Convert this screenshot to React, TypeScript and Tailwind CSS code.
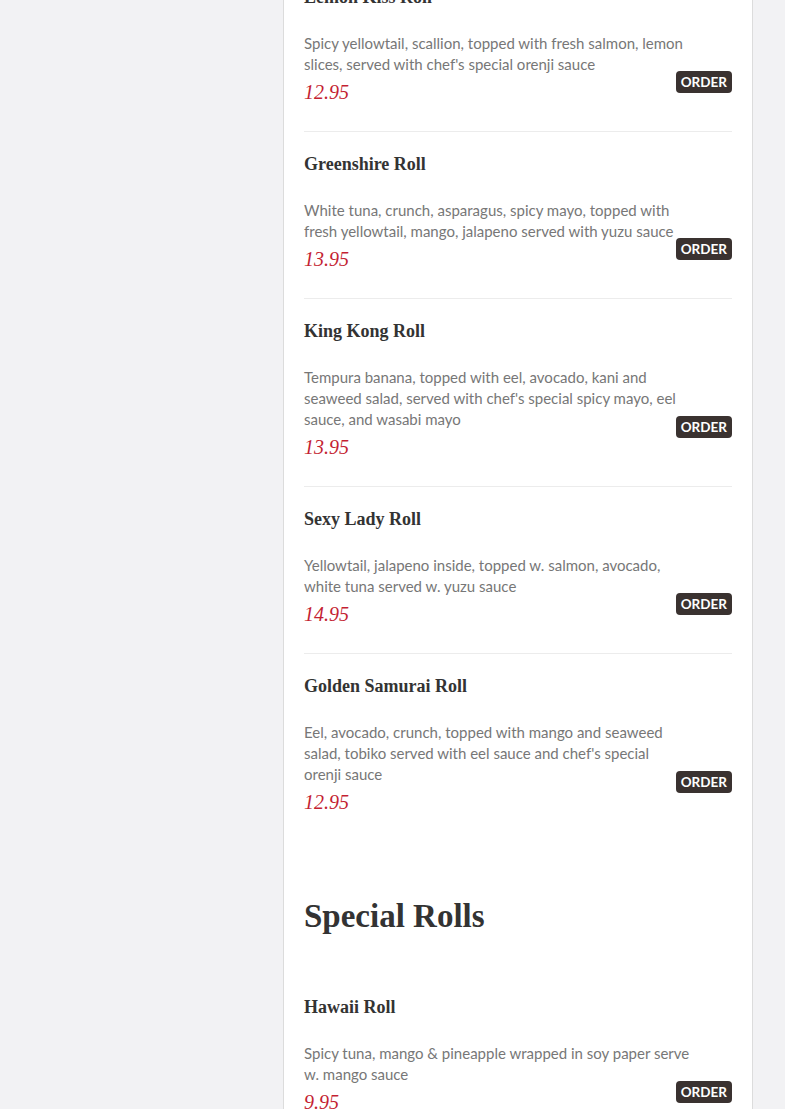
// Sushi roll menu section

type Roll = {
  name: string;
  description: string;
  price: string;
};

const signatureRolls: Roll[] = [
  {
    name: 'Lemon Kiss Roll',
    description:
      "Spicy yellowtail, scallion, topped with fresh salmon, lemon slices, served with chef's special orenji sauce",
    price: '12.95',
  },
  {
    name: 'Greenshire Roll',
    description:
      'White tuna, crunch, asparagus, spicy mayo, topped with fresh yellowtail, mango, jalapeno served with yuzu sauce',
    price: '13.95',
  },
  {
    name: 'King Kong Roll',
    description:
      "Tempura banana, topped with eel, avocado, kani and seaweed salad, served with chef's special spicy mayo, eel sauce, and wasabi mayo",
    price: '13.95',
  },
  {
    name: 'Sexy Lady Roll',
    description:
      'Yellowtail, jalapeno inside, topped w. salmon, avocado, white tuna served w. yuzu sauce',
    price: '14.95',
  },
  {
    name: 'Golden Samurai Roll',
    description:
      "Eel, avocado, crunch, topped with mango and seaweed salad, tobiko served with eel sauce and chef's special orenji sauce",
    price: '12.95',
  },
];

const specialRolls: Roll[] = [
  {
    name: 'Hawaii Roll',
    description: 'Spicy tuna, mango & pineapple wrapped in soy paper serve w. mango sauce',
    price: '9.95',
  },
];

function MenuItem({ roll, last }: { roll: Roll; last?: boolean }) {
  return (
    <div className={last ? 'pt-5' : 'pt-5 border-b border-[#ececec]'}>
      {/* Name */}
      <h3 className="font-['Liberation_Serif',serif] font-bold text-[18px] leading-6 text-[#333]">
        {roll.name}
      </h3>

      {/* Description + price, order button on the right */}
      <div className="mt-6 flex items-center">
        <div className="w-[370px] shrink-0">
          <p className="w-[385.5px] font-['Lato',sans-serif] text-[15px] leading-[21px] text-[#777]">
            {roll.description}
          </p>
          <div className="pb-[21px]">
            <span className="block font-['Liberation_Serif',serif] italic text-[20px] leading-[35px] text-[#c41f33]">
              {roll.price}
            </span>
          </div>
        </div>
        <button className="ml-auto px-[5px] h-[22px] rounded-[4px] bg-[#3a3230] text-white font-['Lato',sans-serif] font-bold text-[13.5px] leading-[22px]">
          ORDER
        </button>
      </div>
    </div>
  );
}

export default function App() {
  return (
    <div className="h-[1109px] overflow-hidden bg-[#f2f2f4] pl-[283px]">
      <div className="w-[470px] min-h-full bg-white border-x border-[#dcdcdc] px-5">
        <div className="-mt-[35px]">
          {signatureRolls.map((roll, i) => (
            <MenuItem key={roll.name} roll={roll} last={i === signatureRolls.length - 1} />
          ))}
        </div>

        {/* Section heading */}
        <h2 className="mt-[57px] font-['Liberation_Serif',serif] font-bold text-[33px] leading-9 text-[#333]">
          Special Rolls
        </h2>

        <div className="mt-[41px]">
          {specialRolls.map((roll) => (
            <MenuItem key={roll.name} roll={roll} />
          ))}
        </div>
      </div>
    </div>
  );
}
